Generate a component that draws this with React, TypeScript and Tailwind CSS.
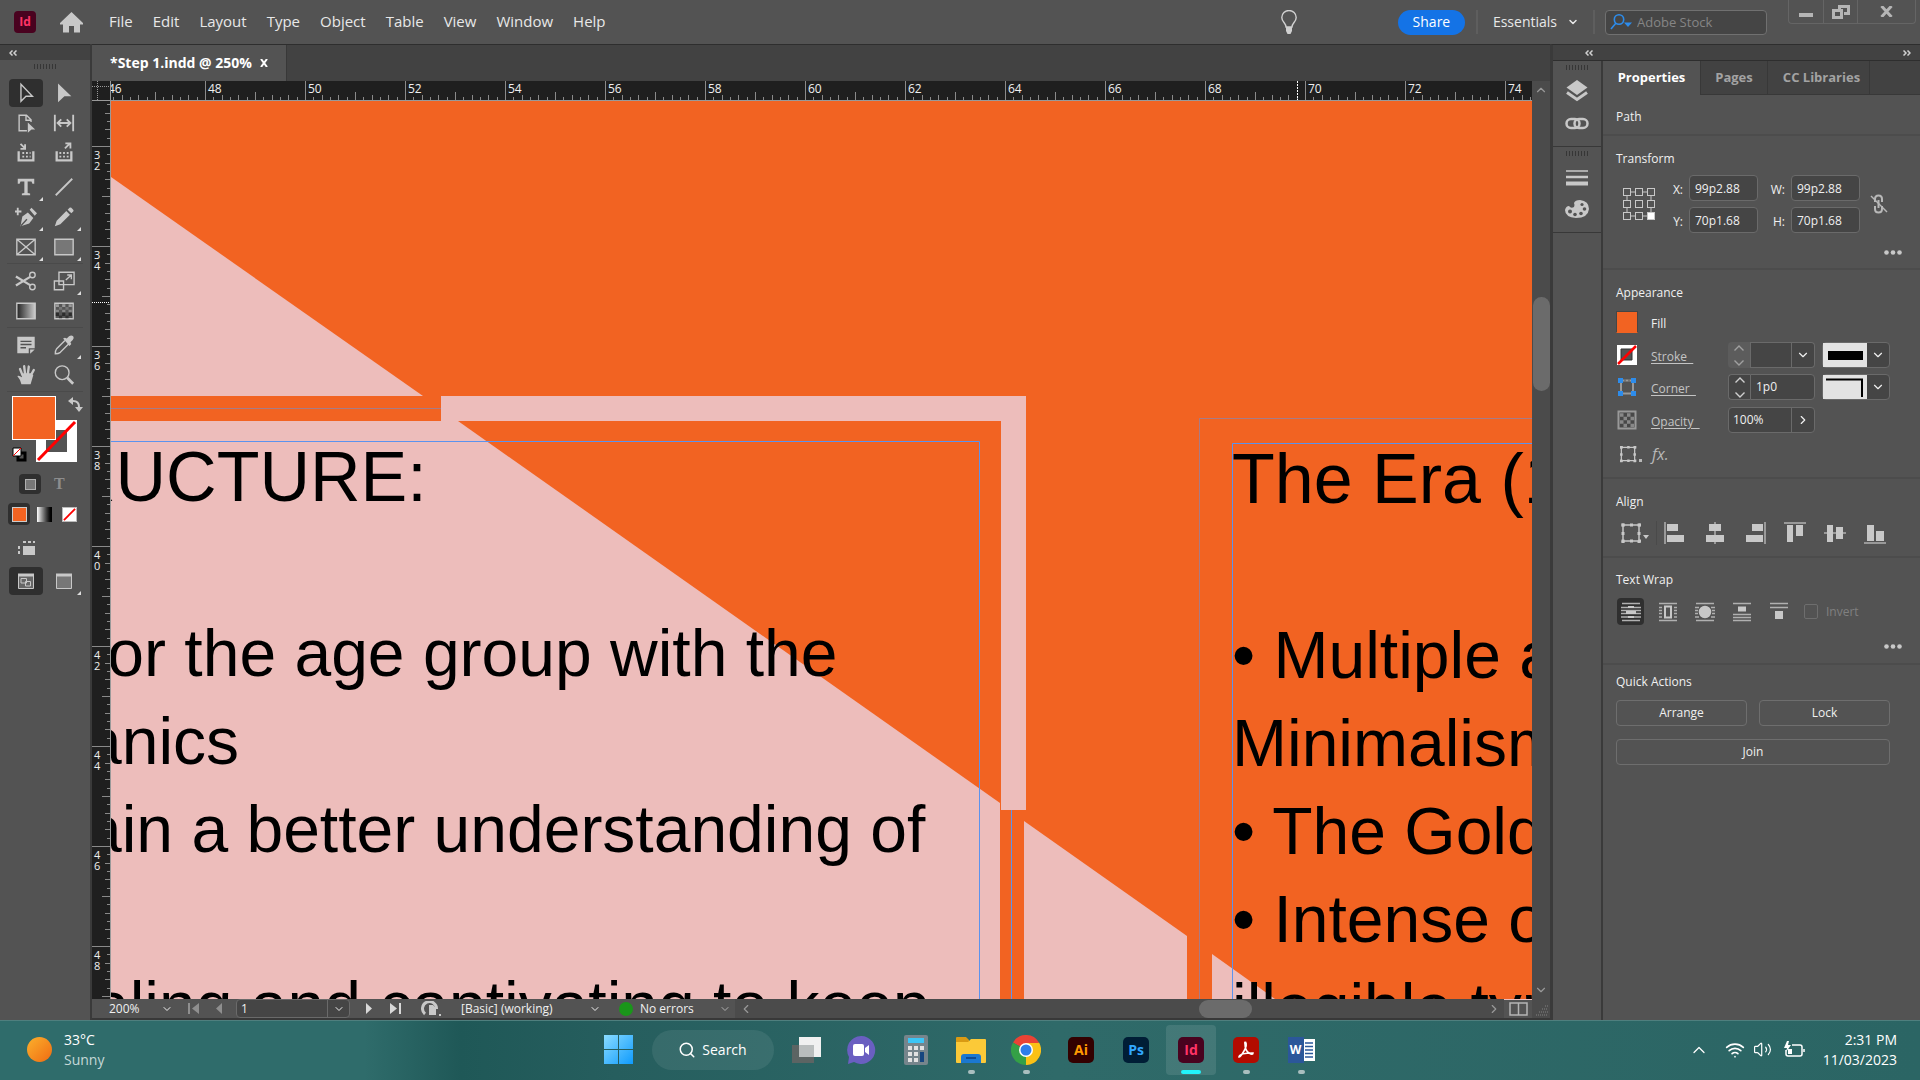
import React from "react";
import { ChevronDown, ChevronUp, ChevronLeft, ChevronRight, Search, Wifi, Volume2 } from "lucide-react";

type IconProps = { children: React.ReactNode; size?: number; className?: string };

// small line/fill drawing on a 24 grid
const Icon = ({ children, size = 24, className = "text-[#c8c8c8]" }: IconProps) => (
  <svg
    width={size}
    height={size}
    viewBox="0 0 24 24"
    fill="none"
    stroke="currentColor"
    strokeWidth="1.5"
    className={`shrink-0 ${className}`}
    aria-hidden="true"
  >
    {children}
  </svg>
);

const menus = ["File", "Edit", "Layout", "Type", "Object", "Table", "View", "Window", "Help"];

const MenuBar = () => (
  <header className="flex h-[44px] shrink-0 items-center bg-[#535353] text-sm text-[#e8e8e8]">
    <div className="ml-3.5 flex h-[22px] w-[22px] items-center justify-center rounded bg-[#49021f] text-xs font-bold text-[#ff3366]">
      Id
    </div>
    <button aria-label="Home" className="ml-6">
      <svg width="23" height="21" viewBox="0 0 23 21" fill="#c8c8c8">
        <path d="M11.5 0L23 11V12.5H20V20.5H14V14H9V20.5H3V12.5H0V11Z" />
      </svg>
    </button>
    <nav className="ml-[26px] flex gap-5 text-[15px]">
      {menus.map((m) => (
        <button key={m}>{m}</button>
      ))}
    </nav>
    <div className="ml-auto flex h-full items-center">
      <button aria-label="Learn" className="mr-[101px]">
        <svg width="16" height="24" viewBox="0 0 16 24" fill="none" stroke="#d0d0d0" strokeWidth="1.4">
          <path d="M5 17C5 13 .8 12 .8 7.500A7.200 7 0 0 1 15.200 7.500C15.200 12 11 13 11 17Z" />
          <path d="M5 17H11V21L9.500 24H6.500L5 21Z" fill="#d0d0d0" stroke="none" />
        </svg>
      </button>
      <button className="h-[25px] w-[67px] rounded-full bg-[#1473e6] text-white">Share</button>
      <span className="ml-[11px] h-6 w-0.5 bg-[#5e5e5e]" />
      <button className="ml-[15px] flex items-center gap-2.5">
        Essentials <ChevronDown size={12} strokeWidth={3} />
      </button>
      <span className="ml-3.5 h-6 w-0.5 bg-[#5e5e5e]" />
      <label className="ml-2.5 flex h-[25px] w-[162px] items-center rounded border border-[#707070] bg-[#454545] pl-1">
        <svg width="23" height="18" viewBox="0 0 23 18" fill="none" stroke="#2d8ceb" strokeWidth="1.6">
          <circle cx="9" cy="6.500" r="4.700" />
          <path d="M6 10L1 16" />
          <path d="M14 9.500H22L18 14Z" fill="#2d8ceb" stroke="none" />
        </svg>
        <input
          aria-label="Adobe Stock"
          placeholder="Adobe Stock"
          className="ml-1 w-28 min-w-0 bg-transparent text-[13px] outline-none placeholder:text-[#858585]"
        />
      </label>
      <div className="mr-1 ml-[21px] flex h-6 self-start rounded-b border border-t-0 border-[#656565] text-[#b5b5b5]">
        <button aria-label="Minimize" className="flex w-[35px] justify-center border-r border-[#656565]">
          <span className="mt-[13px] h-1 w-3.5 bg-[#b5b5b5]" />
        </button>
        <button aria-label="Restore" className="flex w-[34px] items-center justify-center border-r border-[#656565]">
          <svg width="18" height="14" viewBox="0 0 18 14" fill="none" stroke="#b5b5b5" strokeWidth="3">
            <path d="M7.500 4V1.500H16.500V8.500H12" />
            <path d="M1.500 5.500H9.500V12.500H1.500Z" />
          </svg>
        </button>
        <button aria-label="Close" className="flex w-[57px] items-center justify-center">
          <svg width="13" height="11" viewBox="0 0 13 11" stroke="#b5b5b5" strokeWidth="3">
            <path d="M1.500 0L11.500 11M11.500 0L1.500 11" />
          </svg>
        </button>
      </div>
    </div>
  </header>
);

const DoubleArrow = ({ right = false }: { right?: boolean }) => (
  <svg width="8" height="6" viewBox="0 0 8 6" fill="none" stroke="#d0d0d0" strokeWidth="1.5" className={right ? "rotate-180" : ""}>
    <path d="M3.500 .5L1 3L3.500 5.500M7.500 .5L5 3L7.500 5.500" />
  </svg>
);

const Grip = () => (
  <svg width="23" height="5" viewBox="0 0 23 5" stroke="#363636" className="mx-auto">
    <path d="M.5 0V5M3.500 0V5M6.500 0V5M9.500 0V5M12.500 0V5M15.500 0V5M18.500 0V5M21.500 0V5" />
  </svg>
);

type Tool = { name: string; art: React.ReactNode; active?: boolean; more?: boolean };

const toolGroups: { line: boolean; tools: Tool[] }[] = [
  {
    line: false,
    tools: [
      { name: "Selection", active: true, art: <path d="M6.500 2.500L19 15.500H12L6.500 21Z" /> },
      { name: "Direct Selection", art: <path d="M5.500 1.500L20 15.500H12.500L5.500 22Z" fill="currentColor" stroke="none" /> },
      {
        name: "Page",
        art: (
          <>
            <path d="M13 20.500H4.500V3.500H12.500L17.500 8.500V11M12 3.500V9H17.500" />
            <path d="M14 11.500L22 19H18L14 22.500Z" fill="currentColor" stroke="none" />
          </>
        ),
      },
      {
        name: "Gap",
        art: <path strokeWidth="2" d="M2 3V21M22 3V21M5 12H19M9 8L5 12L9 16M15 8L19 12L15 16" />,
      },
      {
        name: "Content Collector",
        art: (
          <>
            <path strokeWidth="2.5" d="M4 10V20H20V10" />
            <path strokeWidth="2" strokeDasharray="2 2" d="M8 12H17M8 16H17" />
            <path strokeWidth="2" d="M6 2L11 7M11 2.500V7.500H6" />
          </>
        ),
      },
      {
        name: "Content Placer",
        art: (
          <>
            <path strokeWidth="2.5" d="M4 10V20H20V10" />
            <path strokeWidth="2" strokeDasharray="2 2" d="M7 12H18M7 16H18" />
            <path strokeWidth="2" d="M13 7L18.500 1.500M13.500 1.500H19V7" />
          </>
        ),
      },
    ],
  },
  {
    line: true,
    tools: [
      {
        name: "Type",
        more: true,
        art: <path fill="currentColor" stroke="none" d="M3 3H21V8.500H19L18 6H13.800V18.500L16.500 19V21H7.500V19L10.200 18.500V6H6L5 8.500H3Z" />,
      },
      { name: "Line", art: <path strokeWidth="2" d="M3 21L21 3" /> },
      {
        name: "Pen",
        more: true,
        art: (
          <g transform="translate(-1 0)">
            <path strokeWidth="2" d="M0 6H8M4 2V10" />
            <path fill="currentColor" stroke="none" d="M7 22L9 11.500L15 7L21 13L16.500 19ZM17 4L19 2L25 8L22.500 10.500Z" />
            <path stroke="#535353" d="M7.500 21.500L14 14.500" />
          </g>
        ),
      },
      {
        name: "Pencil",
        more: true,
        art: <path fill="currentColor" stroke="none" d="M2 22L4 16L14.500 5.500L18.500 9.500L8 20ZM16 4L18 2Q19 1 20 2L22 4Q23 5 22 6L20 8Z" />,
      },
      { name: "Rectangle Frame", more: true, art: <path d="M2 3.500H22V20.500H2ZM2 3.500L22 20.500M22 3.500L2 20.500" /> },
      { name: "Rectangle", more: true, art: <path fill="#777" d="M2 3.500H22V20.500H2Z" /> },
    ],
  },
  {
    line: true,
    tools: [
      {
        name: "Scissors",
        art: (
          <>
            <circle cx="19" cy="5.500" r="3" />
            <circle cx="19" cy="18.500" r="3" />
            <path strokeWidth="2.5" d="M1 7L16.500 16.500M1 17L16.500 7.500" />
          </>
        ),
      },
      { name: "Free Transform", more: true, art: <path d="M6.500 2.500H23V16H6.500ZM1.500 12H11.500V21.500H1.500ZM14 11L20 5.500M15.500 5.500H20V10" /> },
      {
        name: "Gradient Swatch",
        art: (
          <>
            <defs>
              <linearGradient id="gs">
                <stop offset="0" stopColor="#222" />
                <stop offset="1" stopColor="#ccc" />
              </linearGradient>
            </defs>
            <path fill="url(#gs)" d="M2 3.500H22V20.500H2Z" />
          </>
        ),
      },
      {
        name: "Gradient Feather",
        art: (
          <>
            <path fill="#555" d="M2 3.500H22V20.500H2Z" />
            <path stroke="#999" strokeWidth="3" strokeDasharray="3.5 3.5" d="M3 6H21" />
            <path stroke="#777" strokeWidth="3" strokeDasharray="3.5 3.5" strokeDashoffset="3.5" d="M3 9H21" />
            <path stroke="#888" strokeWidth="3" strokeDasharray="3.5 3.5" d="M3 12H21" />
            <path stroke="#2c2c2c" strokeWidth="4" strokeDasharray="3.5 3.5" d="M3 15.500H21" />
            <path stroke="#333" strokeWidth="3" strokeDasharray="3.5 3.5" strokeDashoffset="3.5" d="M3 18.500H21" />
          </>
        ),
      },
    ],
  },
  {
    line: true,
    tools: [
      {
        name: "Note",
        art: (
          <>
            <path fill="currentColor" stroke="none" d="M2.500 3H21.500V15.500H15V21H2.500ZM16.500 17H21.500L16.500 21.500Z" />
            <path stroke="#535353" d="M6 8H18M6 11.500H18M6 15H12" />
          </>
        ),
      },
      {
        name: "Eyedropper",
        more: true,
        art: (
          <>
            <path d="M13 7L4 16Q2.500 18 2.500 21.500Q6 21.500 8 20L17 11" />
            <path fill="currentColor" stroke="none" d="M11 5L13 4L15 5L17.500 2.500Q20 .5 22 2.500Q23.500 4.500 21.500 6.500L19 9L20 11L18 13Z" />
          </>
        ),
      },
      {
        name: "Hand",
        art: (
          <g fill="none" strokeLinecap="round">
            <path d="M7 22Q6 17 2.500 13Q4.500 12 7.500 14.500L9 10H17L20 12L17 22Z" fill="currentColor" stroke="none" />
            <path strokeWidth="2.6" d="M8.500 13L5.500 5.500M11 11L10 2.500M14 11L15 2.800M17 13L20.500 6.500" />
          </g>
        ),
      },
      {
        name: "Zoom",
        art: (
          <>
            <circle cx="10" cy="9.500" r="7.500" />
            <path strokeWidth="3" d="M15.500 15L22 21.500" />
          </>
        ),
      },
    ],
  },
];

const NoneMark = ({ size }: { size: number }) => (
  <svg width={size} height={size} viewBox="0 0 14 14" className="border border-[#bbb] bg-white">
    <path d="M1 13L13 1" stroke="#f00" strokeWidth="2" />
  </svg>
);

const ToolPanel = () => (
  <aside className="flex w-[92px] shrink-0 flex-col border-r-2 border-[#3a3a3a] bg-[#535353]">
    <div className="flex h-4 items-center border-t border-[#2e2e2e] bg-[#424242] pl-[9px]">
      <DoubleArrow />
    </div>
    <div className="pt-1 pb-[7px]">
      <Grip />
    </div>
    {toolGroups.map((group, i) => (
      <div
        key={i}
        className={`mx-[7px] grid grid-cols-2 border-b pt-0.5 pb-px ${group.line ? "border-[#4a4a4a]" : "border-transparent"}`}
      >
        {group.tools.map((t) => (
          <button key={t.name} aria-label={t.name} className="flex h-[30px] items-center justify-center">
            <span
              className={`relative flex h-7 w-[34px] items-center justify-center rounded-sm ${t.active ? "bg-[#2f2f2f]" : ""}`}
            >
              <Icon size={22}>{t.art}</Icon>
              {t.more && (
                <svg width="4" height="4" viewBox="0 0 4 4" fill="#ddd" className="absolute right-0 bottom-0">
                  <path d="M4 0V4H0Z" />
                </svg>
              )}
            </span>
          </button>
        ))}
      </div>
    ))}
    <div className="mx-3 mt-1 grid grid-cols-[44px_24px]">
      {/* fill over stroke */}
      <div className="relative h-[66px]">
        <button aria-label="Stroke" className="absolute top-6 left-6 h-[42px] w-[41px] bg-white">
          <span className="absolute inset-[10px] bg-[#535353]" />
          <svg viewBox="0 0 41 42" className="absolute inset-0" stroke="#f00" strokeWidth="3">
            <path d="M2 40L39 2" />
          </svg>
        </button>
        <button aria-label="Fill" className="absolute top-0 left-0 h-11 w-11 border border-white bg-[#f26322]" />
        <svg width="16" height="15" viewBox="0 0 16 15" className="absolute top-[51px] left-0" fill="none">
          <path d="M6 6H13V13H6Z" stroke="#000" strokeWidth="3" />
          <path d="M1 1H9V9H1Z" fill="#fff" stroke="#000" />
          <path d="M1 9L9 1" stroke="#f00" />
        </svg>
      </div>
      <button aria-label="Swap fill and stroke" className="ml-3 h-4">
        <svg width="15" height="15" viewBox="0 0 15 15" fill="#c8c8c8">
          <path d="M5 0V3Q12 3 12 10H15L11 15L7 10H10Q10 5 5 5V8L0 4Z" />
        </svg>
      </button>
    </div>
    <div className="mt-3 ml-[19px] flex items-center gap-[13px]">
      <button aria-label="Formatting affects container" className="flex h-5 w-[22px] items-center justify-center rounded-sm bg-[#2f2f2f]">
        <span className="h-[11px] w-[11px] border border-[#b0b0b0] bg-[#777]" />
      </button>
      <button aria-label="Formatting affects text" className="font-['Liberation_Serif'] text-base leading-5 font-bold text-[#8d8d8d]">
        T
      </button>
    </div>
    <div className="mt-[9px] ml-2 flex items-center gap-[3px]">
      <button aria-label="Apply color" className="flex h-[22px] w-[22px] items-center justify-center rounded-sm bg-[#2f2f2f]">
        <span className="h-[15px] w-[15px] border border-[#ccc] bg-[#f26322]" />
      </button>
      <button aria-label="Apply gradient" className="flex h-[22px] w-[22px] items-center justify-center">
        <span className="h-[15px] w-[15px] bg-linear-to-r from-white to-black" />
      </button>
      <button aria-label="Apply none" className="flex h-[22px] w-[22px] items-center justify-center">
        <NoneMark size={15} />
      </button>
    </div>
    <button aria-label="View options" className="mt-[13px] ml-[18px] flex h-5 w-5 items-center">
      <svg width="18" height="15" viewBox="0 0 18 15" stroke="#c8c8c8" fill="none">
        <path d="M5 1H17M1 5V14" strokeDasharray="3 2" strokeWidth="2" />
        <path d="M5 5H17V14H5Z" fill="#c8c8c8" stroke="none" />
      </svg>
    </button>
    <div className="mx-[7px] mt-[9px] grid grid-cols-2">
      <button aria-label="Preview mode" className="mx-auto flex h-7 w-[34px] items-center justify-center rounded-sm bg-[#2f2f2f]">
        <svg width="16" height="16" viewBox="0 0 16 16" fill="none" stroke="#c8c8c8">
          <path d="M.5 1.500H15.500V15.500H.5Z" fill="#666" />
          <path d="M0 2H16" strokeWidth="3" />
          <path d="M3 5.500H8.500V10H3ZM7.500 8.500H12.500V13H7.500Z" />
        </svg>
      </button>
      <button aria-label="Screen mode" className="relative mx-auto flex h-7 w-[34px] items-center justify-center">
        <svg width="16" height="16" viewBox="0 0 16 16" fill="none" stroke="#c8c8c8">
          <path d="M.5 1.500H15.500V15.500H.5Z" fill="#777" />
          <path d="M0 2H16" strokeWidth="3" />
        </svg>
        <svg width="4" height="4" viewBox="0 0 4 4" fill="#ddd" className="absolute right-0 bottom-0">
          <path d="M4 0V4H0Z" />
        </svg>
      </button>
    </div>
  </aside>
);

const hMarks = [46, 48, 50, 52, 54, 56, 58, 60, 62, 64, 66, 68, 70, 72, 74];
const vMarks = [30, 32, 34, 36, 38, 40, 42, 44, 46, 48];
const ticks = [1, 2, 3, 4, 5, 6, 7, 8, 9, 10, 11];
const tickLen = (i: number) => (i === 6 ? 8 : i % 2 === 0 ? 5 : 3);

const HRuler = () => (
  <div className="relative flex h-[20px] flex-1 overflow-hidden border-b border-l border-[#999] bg-[#1f1f1f]">
    <div className="-ml-[6px] flex">
      {hMarks.map((n) => (
        <div key={n} className="relative w-[100px] shrink-0 text-xs leading-4 text-[#f0f0f0]">
          <svg width="100" height="19" className="absolute inset-0" stroke="#8a8a8a">
            <path d={`M.5 0V19${ticks.map((i) => `M${Math.round((i * 100) / 12) + 0.5} 19V${19 - tickLen(i)}`).join("")}`} />
          </svg>
          <span className="relative pl-[3px]">{n}</span>
        </div>
      ))}
    </div>
    <svg width="1" height="19" className="absolute left-[1186px]" stroke="#fff" strokeDasharray="2 1">
      <path d="M.5 0V19" />
    </svg>
  </div>
);

const VRuler = () => (
  <div className="relative w-[19px] shrink-0 overflow-hidden border-r border-[#999] bg-[#1f1f1f]">
    <div className="-mt-[55px]">
      {vMarks.map((n) => (
        <div key={n} className="relative h-[100px] text-[11px] leading-[11px] text-[#f0f0f0]">
          <svg width="18" height="100" className="absolute inset-0" stroke="#8a8a8a">
            <path d={`M0 .5H18${ticks.map((i) => `M18 ${Math.round((i * 100) / 12) + 0.5}H${18 - tickLen(i)}`).join("")}`} />
          </svg>
          {n > 30 && (
            <div className="relative pt-[3px] pl-[2px]">
              {String(n).split("").map((d, i) => (
                <div key={i}>{d}</div>
              ))}
            </div>
          )}
        </div>
      ))}
    </div>
    <svg width="18" height="1" className="absolute top-[201px] left-0" stroke="#fff" strokeDasharray="1 1">
      <path d="M0 .5H18" />
    </svg>
  </div>
);

const Artboard = () => (
  <div className="relative min-w-0 flex-1 overflow-hidden bg-[#f26322] font-['Liberation_Sans',sans-serif] text-black">
    <svg width="1421" height="898" className="absolute top-0 left-0">
      <g fill="#edbdbb">
        <path d="M0 76L312 295H0Z" />
        <path d="M0 320H347L889 702V898H0Z" />
        <path d="M330 295H915V709H890V320H330Z" />
        <path d="M913 720L1076 835V898H913Z" />
        <path d="M1101 853L1164 898H1101Z" />
      </g>
      <g fill="none" stroke="#5b93ee" strokeWidth="1">
        <path d="M0 340.500H868.500V898M900.500 709V898" />
        <path d="M1421 342.500H1121.500V898" />
        <path d="M0 307.500H330M1421 317.500H1088.500V898" opacity=".5" />
      </g>
    </svg>
    <div className="absolute top-[332px] -left-[46px] text-[70px] leading-[88px] whitespace-nowrap">RUCTURE:</div>
    <div className="absolute top-[508px] -left-[26px] text-[66px] leading-[88px] whitespace-nowrap">
      <p className="pl-1">for the age group with the</p>
      <p>anics</p>
      <p>ain a better understanding of</p>
      <p className="mt-[88px] pl-2">aling and captivating to keep</p>
    </div>
    <div className="absolute top-[334px] left-[1121px] text-[66px] leading-[88px] whitespace-nowrap">
      <p className="mb-[88px] text-[70px]">The Era (19</p>
      <p>• Multiple a</p>
      <p>Minimalism</p>
      <p>• The Golde</p>
      <p>• Intense o</p>
      <p>illegible typ</p>
    </div>
  </div>
);

const StatusBar = () => (
  <div className="flex h-[21px] shrink-0 items-center border-b-2 border-[#383838] bg-[#535353] text-[#f0f0f0]">
    <label className="relative ml-[17px] flex items-center">
      <span className="sr-only">Zoom</span>
      <select className="w-[68px] appearance-none bg-transparent">
        <option>200%</option>
      </select>
      <ChevronDown size={12} className="pointer-events-none absolute right-1" />
    </label>
    <div className="ml-[11px] flex items-center gap-[17px] text-[#8f8f8f]">
      <button aria-label="First page">
        <svg width="11" height="11" viewBox="0 0 11 11" fill="currentColor"><path d="M0 0H2V11H0ZM11 0V11L4 5.500Z" /></svg>
      </button>
      <button aria-label="Previous page">
        <svg width="7" height="11" viewBox="0 0 7 11" fill="currentColor"><path d="M6 0V11L0 5.500Z" /></svg>
      </button>
    </div>
    <div className="ml-[13px] flex h-[19px] w-[114px] rounded-sm border border-[#6a6a6a] bg-[#454545]">
      <input aria-label="Page" defaultValue="1" className="w-[90px] min-w-0 pl-1 outline-none" />
      <button aria-label="Choose page" className="flex flex-1 items-center justify-center border-l border-[#6a6a6a]">
        <ChevronDown size={12} />
      </button>
    </div>
    <div className="ml-4 flex items-center gap-[17px] text-[#d8d8d8]">
      <button aria-label="Next page">
        <svg width="7" height="11" viewBox="0 0 7 11" fill="currentColor"><path d="M0 0V11L6 5.500Z" /></svg>
      </button>
      <button aria-label="Last page">
        <svg width="11" height="11" viewBox="0 0 11 11" fill="currentColor"><path d="M9 0H11V11H9ZM0 0V11L7 5.500Z" /></svg>
      </button>
    </div>
    <button aria-label="Open page in" className="ml-5">
      <svg width="22" height="16" viewBox="0 0 22 16" fill="none" stroke="#c8c8c8">
        <path d="M4 13A7 7 0 1 1 15.500 8" strokeWidth="3" />
        <path d="M8 4H12L15 7V14H8Z" fill="#c8c8c8" stroke="none" />
        <path d="M18 13H20V15H18Z" fill="#c8c8c8" stroke="none" />
      </svg>
    </button>
    <label className="relative ml-[18px] flex items-center">
      <span className="sr-only">Preflight profile</span>
      <select className="w-[140px] appearance-none bg-transparent text-xs">
        <option>[Basic] (working)</option>
      </select>
      <ChevronDown size={12} className="pointer-events-none absolute right-0" />
    </label>
    <span className="ml-[18px] h-3.5 w-3.5 rounded-full bg-[#1a961a]" />
    <button className="ml-[7px] flex w-[95px] items-center justify-between pr-1">
      No errors <ChevronDown size={12} className="text-[#b0b0b0]" />
    </button>
    <div className="flex h-full min-w-0 flex-1 items-center bg-[#4b4b4b] text-[#999]">
      <ChevronLeft size={14} className="ml-1" />
      <span className="mr-auto ml-[58%] h-[18px] w-[53px] shrink-0 rounded-full bg-[#6b6b6b]" />
      <ChevronRight size={14} className="mr-[3px]" />
    </div>
    <button aria-label="Split layout" className="flex h-full w-7 items-center justify-center border-t border-[#edbdbb] bg-[#535353]">
      <svg width="19" height="14" viewBox="0 0 19 14" fill="none" stroke="#b5b5b5" strokeWidth="1.5">
        <path d="M1 1H18V13H1ZM9.500 1V13" />
      </svg>
    </button>
    <span className="flex h-full w-[18px] items-end justify-end bg-[#4b4b4b] p-0.5">
      <svg width="12" height="12" viewBox="0 0 12 12" stroke="#666" strokeWidth="2" strokeDasharray="1 1">
        <path d="M0 11H12M3 8H12M6 5H12M9 2H12" />
      </svg>
    </span>
  </div>
);

const DocumentArea = () => (
  <main className="flex min-w-0 flex-1 flex-col border-t border-[#2e2e2e] bg-[#424242]">
    <div className="flex h-9 shrink-0">
      <button className="flex items-center gap-2 border-r border-[#383838] bg-[#535353] px-[18px] text-sm font-bold text-white">
        <span>*Step 1.indd @ 250%</span>
        <svg width="8" height="8" viewBox="0 0 8 8" stroke="#fff" strokeWidth="2">
          <path d="M1 0L7 8M7 0L1 8" />
        </svg>
      </button>
    </div>
    <div className="flex min-h-0 flex-1">
      <div className="flex min-w-0 flex-1 flex-col">
        <div className="flex">
          <svg width="18" height="20" className="shrink-0 border-b border-[#999] bg-[#1f1f1f]" stroke="#999" strokeDasharray="1 1">
            <path d="M0 5.500H18M5.500 0V20" />
          </svg>
          <HRuler />
        </div>
        <div className="flex min-h-0 flex-1">
          <VRuler />
          <Artboard />
        </div>
      </div>
      <div className="flex w-[18px] shrink-0 flex-col items-center bg-[#4b4b4b] text-[#999]">
        <ChevronUp size={14} className="mt-0.5" />
        <span className="mt-[200px] h-[94px] w-[17px] rounded-full bg-[#6b6b6b]" />
        <ChevronDown size={14} className="mt-auto mb-0.5" />
      </div>
    </div>
    <StatusBar />
  </main>
);

const DockColumn = () => (
  <div className="flex w-[48px] shrink-0 flex-col bg-[#535353]">
    <div className="border-b border-[#383838] pt-1">
      <Grip />
      <div className="flex h-[76px] flex-col items-center justify-center gap-2.5">
        <button aria-label="Layers">
          <Icon>
            <path fill="currentColor" stroke="none" d="M12 1L22.500 8.500L12 16L1.500 8.500Z" />
            <path strokeWidth="3" d="M2 13.500L12 20.500L22 13.500" />
          </Icon>
        </button>
        <button aria-label="Links">
          <Icon>
            <rect x="1.500" y="6" width="13" height="9" rx="4.500" strokeWidth="2.5" />
            <rect x="9.500" y="6" width="13" height="9" rx="4.500" strokeWidth="2.5" />
          </Icon>
        </button>
      </div>
    </div>
    <div className="border-b border-[#383838] pt-1">
      <Grip />
      <div className="flex h-[76px] flex-col items-center justify-center gap-2.5">
        <button aria-label="Stroke panel">
          <Icon>
            <path strokeWidth="1.5" d="M1 6H23" />
            <path strokeWidth="2.5" d="M1 12H23" />
            <path strokeWidth="4" d="M1 18.500H23" />
          </Icon>
        </button>
        <button aria-label="Color panel">
          <Icon>
            <path fill="currentColor" stroke="none" d="M9 4Q10 1 15 1Q24 2 24 10Q23 19 11 19Q0 18 0 11Q1 7 4 7Q6 10 9 8Q10 6 9 4Z" />
            <g fill="#535353" stroke="none">
              <circle cx="5" cy="12.500" r="2" />
              <circle cx="10" cy="15.500" r="1.800" />
              <circle cx="16" cy="14.500" r="1.800" />
              <circle cx="19.500" cy="10" r="1.800" />
              <circle cx="17" cy="5.500" r="1.600" />
            </g>
          </Icon>
        </button>
      </div>
    </div>
  </div>
);

const Field = ({ id, label, value }: { id: string; label: string; value: string }) => (
  <div className="flex items-center">
    <label htmlFor={id} className="w-[22px] pt-1 pr-1.5 text-right">
      {label}
    </label>
    <input
      id={id}
      defaultValue={value}
      className="h-[26px] w-[69px] rounded border border-[#6a6a6a] bg-[#454545] px-[5px] outline-none"
    />
  </div>
);

const Dots = () => (
  <button aria-label="More options" className="block">
    <svg width="18" height="5" viewBox="0 0 18 5" fill="#c8c8c8">
      <circle cx="2.500" cy="2.500" r="2.300" />
      <circle cx="9" cy="2.500" r="2.300" />
      <circle cx="15.500" cy="2.500" r="2.300" />
    </svg>
  </button>
);

const RefPoints = () => (
  <svg width="32" height="32" viewBox="0 0 32 32" fill="#535353" stroke="#c8c8c8" role="img" aria-label="Reference point">
    <path d="M4 4H28V28H4Z" fill="none" />
    {[0, 1, 2].map((r) =>
      [0, 1, 2].map((c) => (
        <rect
          key={`${r}${c}`}
          x={c * 12 + 0.5}
          y={r * 12 + 0.5}
          width="7"
          height="7"
          fill={r === 2 && c === 2 ? "#fff" : "#535353"}
        />
      ))
    )}
  </svg>
);

const Stepper = ({ disabled = false }: { disabled?: boolean }) => (
  <span
    className={`flex w-[22px] flex-col items-center justify-center gap-px rounded-l ${
      disabled ? "bg-[#5c5c5c] text-[#a0a0a0]" : "border border-r-0 border-[#6a6a6a] bg-[#454545] text-[#d0d0d0]"
    }`}
  >
    <button aria-label="Increase" disabled={disabled}>
      <svg width="10" height="6" viewBox="0 0 10 6" fill="none" stroke="currentColor" strokeWidth="1.4" className="mb-1">
        <path d="M.5 5.500L5 1L9.500 5.500" />
      </svg>
    </button>
    <button aria-label="Decrease" disabled={disabled}>
      <svg width="10" height="6" viewBox="0 0 10 6" fill="none" stroke="currentColor" strokeWidth="1.4" className="mt-1">
        <path d="M.5 .5L5 5L9.500 .5" />
      </svg>
    </button>
  </span>
);

const PictureSelect = ({ name, children }: { name: string; children: React.ReactNode }) => (
  <button aria-label={name} className="ml-[7px] flex h-[26px] w-[68px] rounded-sm border border-[#6a6a6a] bg-[#454545]">
    <span className="h-full w-11 bg-[#e3e3e3]">{children}</span>
    <span className="flex h-full flex-1 items-center justify-center">
      <ChevronDown size={14} />
    </span>
  </button>
);

const alignIcons: [string, string, string][] = [
  ["Align left edges", "M2 1V23", "M4 3H15V10H4ZM4 14H21V21H4Z"],
  ["Align horizontal centers", "M12 1V23", "M6 3H18V10H6ZM3 14H21V21H3Z"],
  ["Align right edges", "M22 1V23", "M9 3H20V10H9ZM3 14H20V21H3Z"],
  ["Align top edges", "M1 2H23", "M4 4H10V21H4ZM13 4H20V15H13Z"],
  ["Align vertical centers", "M1 12H23", "M4 4H10V21H4ZM13 6H20V18H13Z"],
  ["Align bottom edges", "M1 22H23", "M4 4H11V20H4ZM13 10H21V20H13Z"],
];

const wrapIcons: [string, string, React.ReactNode][] = [
  ["No text wrap", "M3 3.500H21M3 20.500H21M2 7.500H22M2 10.500H22M2 13.500H22M2 17H22", <path key="a" d="M9 6H15V8H9ZM7 11H17V14H7ZM9 16H15V18H9Z" fill="currentColor" stroke="none" />],
  ["Wrap around bounding box", "M3 3.500H21M3 20.500H21M3 7.500H6M3 10.500H6M3 13.500H6M3 17H6M18 7.500H21M18 10.500H21M18 13.500H21M18 17H21", <path key="b" d="M9 6.500H15V17.500H9Z" strokeWidth="2" />],
  ["Wrap around object shape", "M3 3.500H21M3 20.500H21M2 7.500H6M2 10.500H5M2 13.500H5M2 17H6M18 7.500H22M19 10.500H22M19 13.500H22M18 17H22", <circle key="c" cx="12" cy="12" r="5.500" fill="currentColor" />],
  ["Jump object", "M3 3.500H21M3 14.500H21M3 17.500H21M3 20.500H21", <path key="d" d="M8 6.500H16V11.500H8Z" fill="currentColor" stroke="none" />],
  ["Jump to next column", "M3 3.500H21M3 7.500H21", <path key="e" d="M8 11H16V19H8Z" fill="currentColor" stroke="none" />],
];

const FrameGlyph = ({ size }: { size: number }) => (
  <Icon size={size}>
    <path d="M4 4H20V20H4Z" />
    <path strokeWidth="3" strokeDasharray="3 5.500" d="M2.500 4H22M2.500 20H22" />
    <path strokeWidth="3" strokeDasharray="3 5.500" d="M4 2.500V22M20 2.500V22" />
  </Icon>
);

const rowName = "w-[77px] pt-1 text-left text-[#c4c4c4] underline underline-offset-2";

const Properties = () => (
  <aside className="flex w-[319px] shrink-0 flex-col border-l-2 border-[#3a3a3a] bg-[#535353] text-[#f0f0f0]">
    <div role="tablist" className="flex h-[34px] shrink-0 bg-[#424242] text-[13px] font-bold text-[#a3a3a3]">
      <button role="tab" aria-selected="true" className="w-[97px] bg-[#535353] text-white">
        Properties
      </button>
      <button role="tab" className="w-[68px] border-r border-b border-l border-[#383838]">
        Pages
      </button>
      <button role="tab" className="w-[102px] border-r border-b border-[#383838] pl-1.5">
        CC Libraries
      </button>
      <span className="flex-1 border-b border-[#383838]" />
    </div>

    <h2 className="h-[41px] border-b-2 border-[#4c4c4c] pt-3.5 pl-[13px]">Path</h2>

    <section className="h-[134px] border-b-2 border-[#4c4c4c] pt-[15px] pl-[13px]">
      <h2>Transform</h2>
      <div className="mt-2 flex items-center">
        <div className="ml-[7px]">
          <RefPoints />
        </div>
        <div className="ml-[12px] grid grid-cols-2 gap-x-[11px] gap-y-1.5">
          <Field id="x" label="X:" value="99p2.88" />
          <Field id="w" label="W:" value="99p2.88" />
          <Field id="y" label="Y:" value="70p1.68" />
          <Field id="h" label="H:" value="70p1.68" />
        </div>
        <button aria-label="Constrain proportions" className="ml-2.5">
          <svg width="18" height="20" viewBox="0 0 18 20" fill="none" stroke="#b8b8b8" strokeWidth="2">
            <path d="M5 8V5Q5 1.500 8.500 1.500T12 5V8M5 12V15Q5 18.500 8.500 18.500T12 15V12M8.500 6V14" />
            <path d="M1 2L17 18" strokeWidth="1.5" />
          </svg>
        </button>
      </div>
      <div className="mt-[17px] mr-[18px] flex justify-end">
        <Dots />
      </div>
    </section>

    <section className="h-[209px] border-b-2 border-[#4c4c4c] pt-[15px] pl-[13px]">
      <h2>Appearance</h2>
      <div className="mt-2 flex h-[26px] items-center">
        <button aria-label="Fill swatch" className="h-[22px] w-[22px] border border-[#454545] border-b-[#f26322] bg-[#f26322]" />
        <span className="pt-1 pl-[13px]">Fill</span>
      </div>
      <div className="mt-[7px] flex h-[26px] items-center">
        <button aria-label="Stroke swatch" className="mr-[13px] h-[22px] w-[22px]">
          <svg width="22" height="22" viewBox="0 0 22 22">
            <path d="M1 1H21V21H1Z" fill="#fff" />
            <path d="M5 5H16V16H5Z" fill="#535353" stroke="#333" />
            <path d="M2 20L20 2" stroke="#f00" strokeWidth="2.5" />
          </svg>
        </button>
        <button className={rowName}>Stroke&nbsp;&nbsp;</button>
        <div className="flex h-[26px] w-[87px]">
          <Stepper disabled />
          <input aria-label="Stroke weight" className="w-[42px] min-w-0 border border-[#6a6a6a] bg-[#454545]" />
          <button aria-label="Stroke weight presets" className="flex flex-1 items-center justify-center rounded-r border border-l-0 border-[#6a6a6a] bg-[#454545]">
            <ChevronDown size={14} />
          </button>
        </div>
        <PictureSelect name="Stroke type">
          <svg width="44" height="24">
            <path d="M5 8H40V17H5Z" fill="#000" />
          </svg>
        </PictureSelect>
      </div>
      <div className="mt-1.5 flex h-[26px] items-center">
        <svg width="22" height="22" viewBox="0 0 22 22" fill="none" className="mr-[13px]">
          <path d="M5 4.500H17V17.500H5Z" stroke="#999" strokeWidth="2" />
          <path d="M8.500 4.500H9.500M12.500 4.500H13.500" stroke="#535353" strokeWidth="2" />
          <path d="M2 2H7V7H2ZM15 2H20V7H15ZM2 15H7V20H2ZM15 15H20V20H15Z" fill="#2d8ceb" />
        </svg>
        <button className={rowName}>Corner&nbsp;&nbsp;</button>
        <div className="flex h-[26px] w-[87px]">
          <Stepper />
          <input
            aria-label="Corner size"
            defaultValue="1p0"
            className="min-w-0 flex-1 rounded-r border border-[#6a6a6a] bg-[#454545] px-[5px] outline-none"
          />
        </div>
        <PictureSelect name="Corner shape">
          <svg width="44" height="24" fill="none">
            <path d="M3 4.500H39V22" stroke="#000" strokeWidth="2" />
          </svg>
        </PictureSelect>
      </div>
      <div className="mt-[7px] flex h-[26px] items-center">
        <svg width="22" height="22" viewBox="0 0 22 22" className="mr-[13px]">
          <path d="M2.500 2.500H19.500V19.500H2.500Z" fill="#484848" stroke="#999" strokeWidth="2" />
          <path d="M4 6H18M4 13H18" stroke="#888" strokeWidth="3.5" strokeDasharray="3.5 3.5" />
          <path d="M7.500 9.500H18M7.500 16.500H18" stroke="#888" strokeWidth="3.5" strokeDasharray="3.5 3.5" />
        </svg>
        <button className={rowName}>Opacity&nbsp;&nbsp;</button>
        <div className="flex h-[26px] w-[87px] rounded border border-[#6a6a6a] bg-[#454545]">
          <input aria-label="Opacity value" defaultValue="100%" className="w-[63px] min-w-0 border-r border-[#6a6a6a] px-1 outline-none" />
          <button aria-label="Opacity slider" className="flex flex-1 items-center justify-center">
            <ChevronRight size={14} />
          </button>
        </div>
      </div>
      <div className="mt-[9px] flex items-center text-[#b8b8b8]">
        <button aria-label="Object style" className="ml-0.5 flex items-end gap-px">
          <FrameGlyph size={20} />
          <span className="mb-0.5 h-[3px] w-[3px] bg-[#b8b8b8]" />
        </button>
        <button className="ml-2.5 text-base leading-6 italic">fx.</button>
      </div>
    </section>

    <section className="h-[79px] border-b-2 border-[#4c4c4c] pt-[15px] pl-[13px]">
      <h2>Align</h2>
      <div className="mt-2 flex h-[29px] items-center">
        <button aria-label="Align to" className="flex w-[41px] items-end border-r border-[#4a4a4a] pl-[3px]">
          <FrameGlyph size={24} />
          <svg width="6" height="4" viewBox="0 0 6 4" fill="#c8c8c8" className="mb-1.5">
            <path d="M0 0H6L3 4Z" />
          </svg>
        </button>
        <div className="ml-1.5 flex gap-4">
          {alignIcons.map(([name, line, bars]) => (
            <button key={name} aria-label={name}>
              <Icon>
                <path d={line} stroke="#999" strokeWidth="2" />
                <path d={bars} fill="currentColor" stroke="none" />
              </Icon>
            </button>
          ))}
        </div>
      </div>
    </section>

    <section className="h-[107px] border-b-2 border-[#4c4c4c] pt-3.5 pl-[13px]">
      <h2>Text Wrap</h2>
      <div className="mt-2.5 flex items-center gap-2.5 pl-px">
        {wrapIcons.map(([name, lines, shape], i) => (
          <button key={name} aria-label={name} className={`flex h-[27px] w-[27px] items-center justify-center rounded-sm ${i === 0 ? "bg-[#2f2f2f]" : ""}`}>
            <Icon>
              <path d={lines} stroke="#b0b0b0" />
              {shape}
            </Icon>
          </button>
        ))}
        <label className="ml-0.5 flex items-center gap-2 text-[#808080]">
          <input type="checkbox" disabled className="h-[15px] w-3.5 appearance-none rounded-xs border border-[#6e6e6e]" />
          Invert
        </label>
      </div>
      <div className="mt-[19px] mr-[18px] flex justify-end">
        <Dots />
      </div>
    </section>

    <section className="pt-[9px] pr-[30px] pl-[13px]">
      <h2>Quick Actions</h2>
      <div className="mt-2.5 grid grid-cols-2 gap-x-3 gap-y-[13px]">
        <button className="h-[26px] rounded border border-[#6e6e6e]">Arrange</button>
        <button className="h-[26px] rounded border border-[#6e6e6e]">Lock</button>
        <button className="col-span-2 h-[26px] rounded border border-[#6e6e6e]">Join</button>
      </div>
    </section>
  </aside>
);

const SidePanels = () => (
  <div className="flex shrink-0 flex-col border-t border-l-[3px] border-[#2e2e2e] border-l-[#3a3a3a] bg-[#424242]">
    <div className="flex h-4 shrink-0 items-center justify-between border-b border-[#2e2e2e] pr-[9px] pl-8">
      <DoubleArrow />
      <DoubleArrow right />
    </div>
    <div className="flex flex-1">
      <DockColumn />
      <Properties />
    </div>
  </div>
);

const AdobeTile = ({ text, className }: { text: string; className: string }) => (
  <span className={`flex h-[26px] w-[26px] items-center justify-center rounded-[5px] text-sm font-bold ${className}`}>{text}</span>
);

const apps: { name: string; art: React.ReactNode; dot?: boolean; active?: boolean }[] = [
  {
    name: "Task View",
    art: (
      <svg width="30" height="30" viewBox="0 0 30 30">
        <path d="M1 10H23V28H1Z" fill="#5c6463" />
        <path d="M8 2H30V22H8Z" fill="#f0f0f0" />
        <path d="M8 10H23V22H8Z" fill="#b9bdbd" />
      </svg>
    ),
  },
  {
    name: "Chat",
    art: (
      <svg width="30" height="30" viewBox="0 0 30 30">
        <path d="M15 1A14 14 0 1 1 8 27L2 29L3 22A14 14 0 0 1 15 1Z" fill="#6a5fc1" />
        <rect x="7" y="9" width="11" height="12" rx="2" fill="#fff" />
        <path d="M19 13L23 10V20L19 17Z" fill="#fff" />
      </svg>
    ),
  },
  {
    name: "Calculator",
    art: (
      <svg width="24" height="30" viewBox="0 0 24 30">
        <rect width="24" height="30" rx="2" fill="#76858c" />
        <path d="M4 3H20V8H4Z" fill="#3cc5f5" />
        <path d="M4 11H8V15H4ZM10 11H14V15H10ZM16 11H20V15H16ZM4 17H8V21H4ZM10 17H14V21H10ZM4 23H8V27H4ZM10 23H14V27H10Z" fill="#e2e2e2" />
        <path d="M16 17H20V27H16Z" fill="#17467f" />
      </svg>
    ),
  },
  {
    name: "File Explorer",
    dot: true,
    art: (
      <svg width="30" height="28" viewBox="0 0 30 28">
        <path d="M0 2Q0 1 1 1H10L13 4V10H0Z" fill="#d99a13" />
        <path d="M0 6H12L15 3H29Q30 3 30 4V26Q30 27 29 27H1Q0 27 0 26Z" fill="#fbc938" />
        <path d="M5 27V21Q5 18 8 18H22Q25 18 25 21V27Z" fill="#1b78d0" />
        <path d="M10 22H20" stroke="#0d4b94" strokeWidth="2" />
      </svg>
    ),
  },
  {
    name: "Chrome",
    dot: true,
    art: (
      <svg width="30" height="30" viewBox="0 0 30 30">
        <path d="M15 15L2 7.500A15 15 0 0 1 28 7.500Z" fill="#ea4335" />
        <path d="M15 15L28 7.500A15 15 0 0 1 15 30Z" fill="#fbc116" />
        <path d="M15 15L15 30A15 15 0 0 1 2 7.500Z" fill="#34a046" />
        <path d="M15 8H28Q31 18 24 27L15 30L21 18Z" fill="#fbc116" />
        <circle cx="15" cy="15" r="7" fill="#fff" />
        <circle cx="15" cy="15" r="5.500" fill="#2f7de9" />
      </svg>
    ),
  },
  { name: "Illustrator", art: <AdobeTile text="Ai" className="bg-[#330000] text-[#ff9a00]" /> },
  { name: "Photoshop", art: <AdobeTile text="Ps" className="bg-[#001e36] text-[#31a8ff]" /> },
  { name: "InDesign", active: true, art: <AdobeTile text="Id" className="bg-[#49021f] text-[#ff3366]" /> },
  {
    name: "Acrobat",
    dot: true,
    art: (
      <svg width="26" height="26" viewBox="0 0 26 26">
        <rect width="26" height="26" rx="5" fill="#b30b00" />
        <path d="M12.500 5Q14.500 8 11 14T6 20Q6 16 20 16Q20 18.500 16 16T12 7Q11.500 5 12.500 5" fill="none" stroke="#fff" strokeWidth="1.6" />
      </svg>
    ),
  },
  {
    name: "Word",
    dot: true,
    art: (
      <span className="flex items-center">
        <span className="flex h-[26px] w-4 items-center justify-center bg-[#2b579a] text-xs font-bold text-white">W</span>
        <svg width="11" height="22" viewBox="0 0 11 22" fill="none" stroke="#2b579a" strokeWidth="1.5">
          <path d="M0 0H11V22H0Z" fill="#fff" stroke="none" />
          <path d="M1 4H9M1 7.500H9M1 11H9M1 14.500H9M1 18H9" />
        </svg>
      </span>
    ),
  },
];

const Taskbar = () => (
  <footer className="flex h-[60px] shrink-0 items-center border-t border-[#4f7f7e] bg-[linear-gradient(90deg,#2f6c6b_0%,#2f6c6b_19%,#1f5857_24%,#265e5e_32%,#2f6a69_55%,#2b6564_100%)] pb-0.5 text-sm text-white">
    <div className="flex flex-1 items-center">
      <span className="ml-[27px] h-[25px] w-[25px] rounded-full bg-linear-to-br from-[#fbb02c] to-[#ee6a12]" />
      <div className="ml-3 leading-5">
        <p>33°C</p>
        <p className="text-[#c5d8d8]">Sunny</p>
      </div>
    </div>
    <div className="flex items-center">
      <button aria-label="Start" className="flex w-[54px] justify-center">
        <svg width="29" height="29" viewBox="0 0 29 29">
          <defs>
            <linearGradient id="win" x1="0" y1="0" x2="1" y2="1">
              <stop offset="0" stopColor="#8adcff" />
              <stop offset="1" stopColor="#0f9bfd" />
            </linearGradient>
          </defs>
          <path fill="url(#win)" d="M0 0H14V14H0ZM15 0H29V14H15ZM0 15H14V29H0ZM15 15H29V29H15Z" />
        </svg>
      </button>
      <button className="mr-[5px] ml-1.5 flex h-10 w-[122px] items-center justify-center gap-1.5 rounded-full bg-white/8">
        <Search size={18} /> Search
      </button>
      {apps.map((a) => (
        <button key={a.name} aria-label={a.name} className="flex w-[55px] justify-center">
          <span className={`relative flex h-[50px] w-[50px] items-center justify-center rounded ${a.active ? "bg-white/10" : ""}`}>
            {a.art}
            {a.active && <span className="absolute bottom-px h-1 w-5 rounded-full bg-[#22f3fa]" />}
            {a.dot && <span className="absolute bottom-px h-1 w-[7px] rounded-full bg-[#a9bfbf]" />}
          </span>
        </button>
      ))}
    </div>
    <div className="flex flex-1 items-center justify-end">
      <ChevronUp size={20} strokeWidth={1.5} />
      <Wifi size={20} className="ml-4" />
      <Volume2 size={19} strokeWidth={1.5} className="ml-2" />
      <svg width="21" height="18" viewBox="0 0 21 18" fill="none" stroke="#fff" strokeWidth="1.5" className="ml-3">
        <path d="M8 4H16Q18 4 18 6V13Q18 15 16 15H4Q2 15 2 13V9M20 8V11" />
        <path d="M4 8H8V13H4ZM3 0L0 7H3L2 11L7 4H4L5 0Z" fill="#fff" stroke="none" />
      </svg>
      <div className="mr-[23px] ml-[18px] text-right leading-5">
        <p>2:31 PM</p>
        <p>11/03/2023</p>
      </div>
    </div>
  </footer>
);

const App = () => {
  return (
    <div className="flex h-screen flex-col overflow-hidden bg-[#535353] font-['Open_Sans','Noto_Sans',sans-serif] text-xs">
      <MenuBar />
      <div className="flex min-h-0 flex-1">
        <ToolPanel />
        <DocumentArea />
        <SidePanels />
      </div>
      <Taskbar />
    </div>
  );
};

export default App;
